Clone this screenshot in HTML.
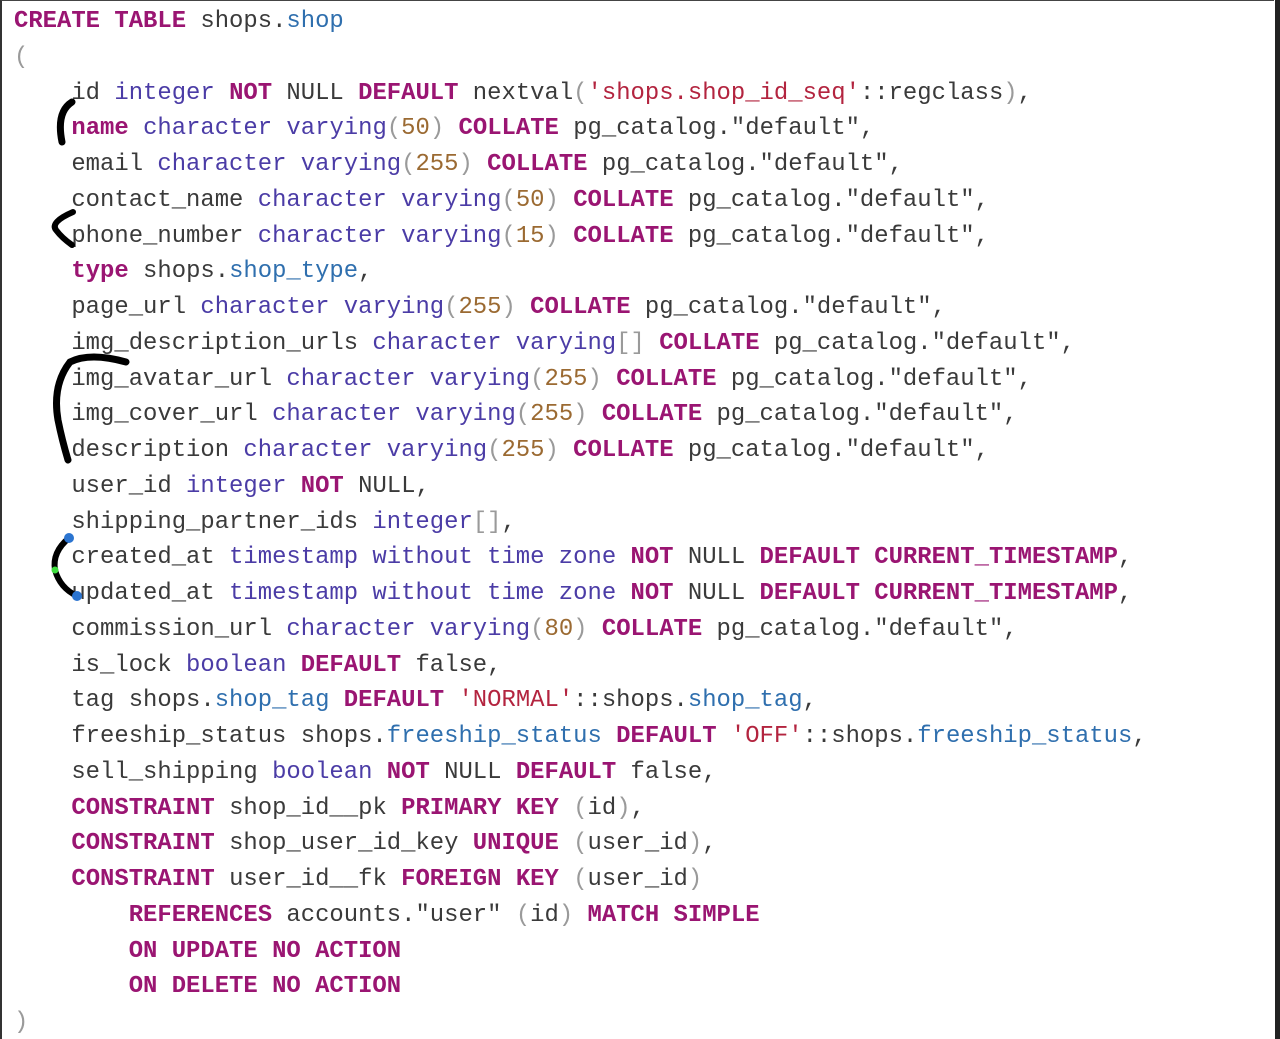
<!DOCTYPE html>
<html><head><meta charset="utf-8"><style>
html,body{margin:0;padding:0;background:#fff;width:1280px;height:1039px;overflow:hidden;position:relative}
.frame{position:absolute;left:0;top:0;width:1274px;height:1039px;border-left:2px solid #333;border-top:1px solid #444;box-sizing:border-box}
.rs{position:absolute;right:0;top:0;width:5px;height:1039px;background:#222}
pre{position:absolute;left:14px;top:4px;margin:0;font-family:"Liberation Mono","DejaVu Sans Mono",monospace;font-size:23.9px;line-height:35.75px;color:#3a3a3a}
.k{color:#9a1572;font-weight:bold}.t{color:#4b3ca6}.n{color:#2f6fae}.d{color:#9b6a32}.s{color:#b3243f}.p{color:#9a9a9a}
svg{position:absolute;left:0;top:0}
</style></head><body>
<div class="frame"></div><div class="rs"></div>
<pre><span class="k">CREATE TABLE</span> shops.<span class="n">shop</span>
<span class="p">(</span>
    id <span class="t">integer</span> <span class="k">NOT</span> NULL <span class="k">DEFAULT</span> nextval<span class="p">(</span><span class="s">'shops.shop_id_seq'</span>::regclass<span class="p">)</span>,
    <span class="k">name</span> <span class="t">character varying</span><span class="p">(</span><span class="d">50</span><span class="p">)</span> <span class="k">COLLATE</span> pg_catalog."default",
    email <span class="t">character varying</span><span class="p">(</span><span class="d">255</span><span class="p">)</span> <span class="k">COLLATE</span> pg_catalog."default",
    contact_name <span class="t">character varying</span><span class="p">(</span><span class="d">50</span><span class="p">)</span> <span class="k">COLLATE</span> pg_catalog."default",
    phone_number <span class="t">character varying</span><span class="p">(</span><span class="d">15</span><span class="p">)</span> <span class="k">COLLATE</span> pg_catalog."default",
    <span class="k">type</span> shops.<span class="n">shop_type</span>,
    page_url <span class="t">character varying</span><span class="p">(</span><span class="d">255</span><span class="p">)</span> <span class="k">COLLATE</span> pg_catalog."default",
    img_description_urls <span class="t">character varying</span><span class="p">[]</span> <span class="k">COLLATE</span> pg_catalog."default",
    img_avatar_url <span class="t">character varying</span><span class="p">(</span><span class="d">255</span><span class="p">)</span> <span class="k">COLLATE</span> pg_catalog."default",
    img_cover_url <span class="t">character varying</span><span class="p">(</span><span class="d">255</span><span class="p">)</span> <span class="k">COLLATE</span> pg_catalog."default",
    description <span class="t">character varying</span><span class="p">(</span><span class="d">255</span><span class="p">)</span> <span class="k">COLLATE</span> pg_catalog."default",
    user_id <span class="t">integer</span> <span class="k">NOT</span> NULL,
    shipping_partner_ids <span class="t">integer</span><span class="p">[]</span>,
    created_at <span class="t">timestamp without time zone</span> <span class="k">NOT</span> NULL <span class="k">DEFAULT</span> <span class="k">CURRENT_TIMESTAMP</span>,
    updated_at <span class="t">timestamp without time zone</span> <span class="k">NOT</span> NULL <span class="k">DEFAULT</span> <span class="k">CURRENT_TIMESTAMP</span>,
    commission_url <span class="t">character varying</span><span class="p">(</span><span class="d">80</span><span class="p">)</span> <span class="k">COLLATE</span> pg_catalog."default",
    is_lock <span class="t">boolean</span> <span class="k">DEFAULT</span> false,
    tag shops.<span class="n">shop_tag</span> <span class="k">DEFAULT</span> <span class="s">'NORMAL'</span>::shops.<span class="n">shop_tag</span>,
    freeship_status shops.<span class="n">freeship_status</span> <span class="k">DEFAULT</span> <span class="s">'OFF'</span>::shops.<span class="n">freeship_status</span>,
    sell_shipping <span class="t">boolean</span> <span class="k">NOT</span> NULL <span class="k">DEFAULT</span> false,
    <span class="k">CONSTRAINT</span> shop_id__pk <span class="k">PRIMARY KEY</span> <span class="p">(</span>id<span class="p">)</span>,
    <span class="k">CONSTRAINT</span> shop_user_id_key <span class="k">UNIQUE</span> <span class="p">(</span>user_id<span class="p">)</span>,
    <span class="k">CONSTRAINT</span> user_id__fk <span class="k">FOREIGN KEY</span> <span class="p">(</span>user_id<span class="p">)</span>
        <span class="k">REFERENCES</span> accounts."user" <span class="p">(</span>id<span class="p">)</span> <span class="k">MATCH SIMPLE</span>
        <span class="k">ON UPDATE NO ACTION</span>
        <span class="k">ON DELETE NO ACTION</span>
<span class="p">)</span></pre>
<svg width="1280" height="1039" fill="none" stroke="#000" stroke-linecap="round">
<path d="M72 102 Q56 112 62 142" stroke-width="7"/>
<path d="M73 212 Q50 222 56 230 Q62 238 72 245" stroke-width="6"/>
<path d="M126 362 Q90 352 70 362 Q52 385 58 420 Q62 440 68 460" stroke-width="7"/>
<path d="M69 538 Q52 552 55 570 Q60 588 77 596" stroke-width="6"/>
<circle cx="69" cy="538" r="5" fill="#2b74d0" stroke="none"/>
<circle cx="77" cy="596" r="5" fill="#2b74d0" stroke="none"/>
<circle cx="55" cy="570" r="3.5" fill="#3ddc3d" stroke="none"/>
</svg>
</body></html>
